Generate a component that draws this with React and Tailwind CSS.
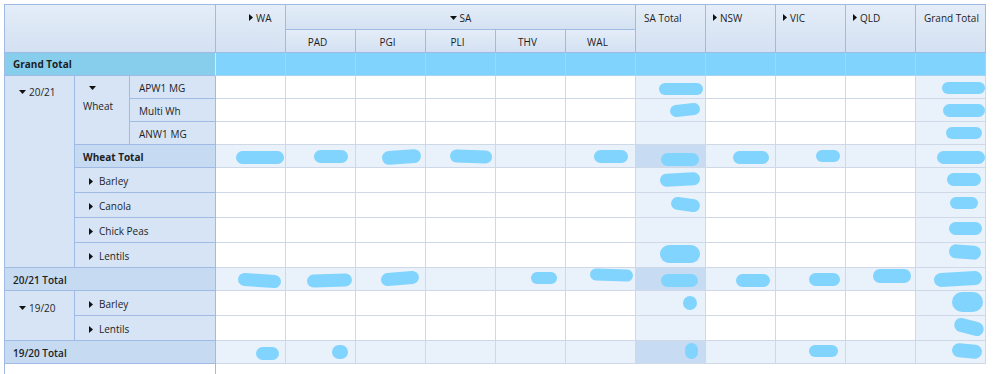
import React from 'react';

// blob = [width, height, marginRight, dy, rotate]
const rows = [
  { key: 'apw1', total: false, blobs: { 6: [44, 12, 2, 2, 0], 10: [43, 12, 0, 1, 0] } },
  { key: 'multi', total: false, blobs: { 6: [30, 12, 5, 0, -6], 10: [42, 13, 0, 0, 0] } },
  { key: 'anw1', total: false, blobs: { 10: [36, 12, 3, 0, 0] } },
  {
    key: 'wheatTotal',
    total: true,
    blobs: {
      0: [48, 13, 1, 1, 0], 1: [34, 13, 7, 0, 0], 2: [39, 14, 4, 1, -4], 3: [42, 13, 3, 0, 2],
      5: [34, 13, 7, 0, 0], 6: [38, 13, 6, 3, 0], 7: [36, 13, 6, 1, 0], 8: [24, 12, 5, 0, 0], 10: [48, 13, 0, 1, 0],
    },
  },
  { key: 'barley', total: false, blobs: { 6: [40, 13, 5, -1, -3], 10: [34, 13, 4, -1, 0] } },
  { key: 'canola', total: false, blobs: { 6: [29, 13, 5, -1, 8], 10: [28, 12, 7, -2, 0] } },
  { key: 'chick', total: false, blobs: { 10: [33, 13, 3, -2, 0] } },
  { key: 'lentils', total: false, blobs: { 6: [40, 18, 5, -1, 0], 10: [32, 14, 4, -3, 4] } },
  {
    key: '2021Total',
    total: true,
    blobs: {
      0: [43, 13, 4, 1, 4], 1: [45, 13, 3, 1, -2], 2: [38, 13, 6, -1, -5], 4: [26, 12, 8, -1, 0],
      5: [43, 12, 2, -4, 2], 6: [37, 13, 7, 1, 0], 7: [34, 13, 5, 1, 0], 8: [31, 13, 5, 0, 0],
      9: [38, 14, 4, -3, 0], 10: [48, 14, 3, 0, -3],
    },
  },
  { key: 'barley1920', total: false, blobs: { 6: [14, 14, 8, 0, 0], 10: [31, 20, 2, -1, 0] } },
  { key: 'lentils1920', total: false, blobs: { 10: [30, 14, 1, -1, 15] } },
  {
    key: '1920Total',
    total: true,
    blobs: { 0: [23, 13, 6, 1, 0], 1: [16, 14, 7, 0, 0], 6: [13, 16, 7, -1, 0], 8: [29, 12, 7, -1, 0], 10: [30, 14, 3, -1, 5] },
  },
];

const RightArrow = () => (
  <svg width="4" height="7" viewBox="0 0 4 7" className="shrink-0">
    <polygon points="0,0 4,3.5 0,7" fill="#111" />
  </svg>
);

const DownArrow = () => (
  <svg width="7" height="4" viewBox="0 0 7 4" className="shrink-0">
    <polygon points="0,0 7,0 3.5,4" fill="#111" />
  </svg>
);

const hd = 'border-r border-b border-[#9fbbe3] bg-gradient-to-b from-[#e4edf8] to-[#d4e1f2]';
const lbl = 'border-r border-b border-[#9fbbe3] bg-[#d6e4f5] flex items-center pt-[2px]';
const lblTot = 'border-r border-b border-[#9fbbe3] bg-[#c6daf2] flex items-center pt-[2px]';

function ValueCells({ row }) {
  return Array.from({ length: 11 }).map((_, i) => {
    let bg = 'bg-white';
    if (row.total) bg = i === 6 ? 'bg-[#c7dbf2]' : 'bg-[#e9f1fb]';
    else if (i === 6 || i === 10) bg = 'bg-[#e9f1fb]';
    const b = row.blobs[i];
    return (
      <div key={row.key + i} className={`border-r border-b border-[#cfd8e6] flex items-center justify-end ${bg}`}>
        {b && (
          <span
            className="block rounded-full bg-[#80d4fd]"
            style={{
              width: b[0],
              height: b[1],
              marginRight: b[2],
              transform: `translateY(${b[3]}px) rotate(${b[4]}deg)`,
            }}
          />
        )}
      </div>
    );
  });
}

export default function App() {
  return (
    <div className="w-[1000px] h-[374px] overflow-hidden bg-white pl-[4px] pt-[4px] text-[10px] text-[#1e1e1e] font-['Open_Sans',sans-serif]">
      <div className="grid w-max grid-cols-[70px_55px_86px_repeat(11,70px)] grid-rows-[25px_23px_23px_23px_23px_23px_23px_25px_25px_25px_25px_23px_25px_25px_23px_12px] border-l border-t border-[#9fbbe3]">
        {/* header */}
        <div className={`${hd} col-span-3 row-span-2`} />
        <div className={`${hd} row-span-2 flex items-start gap-[3px] pl-[33px] pt-[6px]`}>
          <span className="mt-[3px]"><RightArrow /></span>
          <span>WA</span>
        </div>
        <div className={`${hd} col-span-5 flex items-start justify-center gap-[3px] pt-[6px]`}>
          <span className="mt-[5px]"><DownArrow /></span>
          <span>SA</span>
        </div>
        <div className={`${hd} row-span-2 pl-[8px] pt-[6px]`}>SA Total</div>
        {['NSW', 'VIC', 'QLD'].map((s) => (
          <div key={s} className={`${hd} row-span-2 flex items-start gap-[3px] pl-[7px] pt-[6px]`}>
            <span className="mt-[3px]"><RightArrow /></span>
            <span>{s}</span>
          </div>
        ))}
        <div className={`${hd} row-span-2 pl-[8px] pt-[6px]`}>Grand Total</div>
        {['PAD', 'PGI', 'PLI', 'THV', 'WAL'].map((s) => (
          <div key={s} className={`${hd} flex items-center justify-center pt-[3px] pr-[6px]`}>{s}</div>
        ))}

        {/* grand total row */}
        <div className="col-span-3 border-r border-b border-r-[#d4ecf8] border-b-[#9fbbe3] bg-[#87cdec] flex items-center pl-[8px] pt-[1px] font-bold">
          Grand Total
        </div>
        {Array.from({ length: 11 }).map((_, i) => (
          <div key={'gt' + i} className="border-r border-b border-[#a6d6ef] bg-[#7fd3fc]" />
        ))}

        {/* 20/21 */}
        <div className="row-span-8 border-r border-b border-[#9fbbe3] bg-[#d6e4f5] pt-[9px] pl-[14px] flex items-start gap-[3px]">
          <span className="mt-[5px]"><DownArrow /></span>
          <span>20/21</span>
        </div>
        <div className="row-span-3 border-r border-b border-[#9fbbe3] bg-[#d6e4f5] pt-[3px] pl-[8px]">
          <div className="h-[18px] flex items-center pl-[6px]"><DownArrow /></div>
          <div className="leading-[18px]">Wheat</div>
        </div>
        <div className={`${lbl} pl-[9px]`}>APW1 MG</div>
        <ValueCells row={rows[0]} />
        <div className={`${lbl} pl-[9px]`}>Multi Wh</div>
        <ValueCells row={rows[1]} />
        <div className={`${lbl} pl-[9px]`}>ANW1 MG</div>
        <ValueCells row={rows[2]} />
        <div className={`${lblTot} col-span-2 pl-[8px] font-bold`}>Wheat Total</div>
        <ValueCells row={rows[3]} />
        {['Barley', 'Canola', 'Chick Peas', 'Lentils'].map((s, i) => (
          <React.Fragment key={s}>
            <div className={`${lbl} col-span-2 pl-[14px] gap-[6px]`}>
              <RightArrow />
              <span>{s}</span>
            </div>
            <ValueCells row={rows[4 + i]} />
          </React.Fragment>
        ))}
        <div className={`${lblTot} col-span-3 pl-[8px] font-semibold`}>20/21 Total</div>
        <ValueCells row={rows[8]} />

        {/* 19/20 */}
        <div className="row-span-2 border-r border-b border-[#9fbbe3] bg-[#d6e4f5] pt-[10px] pl-[14px] flex items-start gap-[3px]">
          <span className="mt-[5px]"><DownArrow /></span>
          <span>19/20</span>
        </div>
        <div className={`${lbl} col-span-2 pl-[14px] gap-[6px]`}>
          <RightArrow />
          <span>Barley</span>
        </div>
        <ValueCells row={rows[9]} />
        <div className={`${lbl} col-span-2 pl-[14px] gap-[6px]`}>
          <RightArrow />
          <span>Lentils</span>
        </div>
        <ValueCells row={rows[10]} />
        <div className={`${lblTot} col-span-3 pl-[8px] font-semibold`}>19/20 Total</div>
        <ValueCells row={rows[11]} />

        {/* left panel continues */}
        <div className="col-span-3 border-r border-[#9fbbe3] bg-white" />
      </div>
    </div>
  );
}
